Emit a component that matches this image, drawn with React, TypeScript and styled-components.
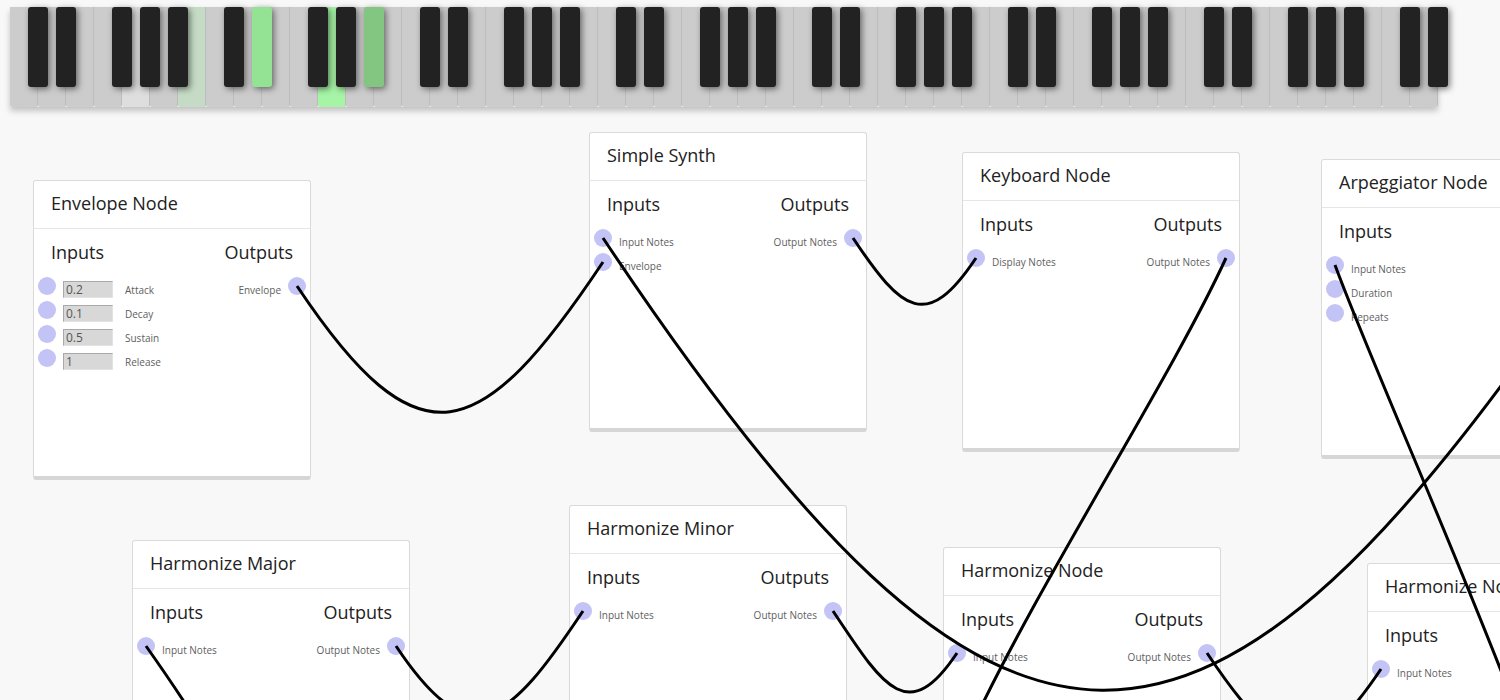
import React from 'react';
import styled, { createGlobalStyle } from 'styled-components';

const GlobalStyle = createGlobalStyle`
  html, body {
    margin: 0;
    padding: 0;
    background: #f8f8f8;
  }
  body {
    font-family: "Open Sans", "Liberation Sans", sans-serif;
    color: #222;
  }
`;

const Canvas = styled.div`
  position: relative;
  width: 1500px;
  height: 700px;
  overflow: hidden;
  background: #f8f8f8;
`;

/* ---------- piano ---------- */

const Piano = styled.div`
  display: flex;
  width: 1428px;
  height: 100px;
  margin: 7px 0 0 10px;
  box-shadow: 0 4px 6px rgba(0, 0, 0, 0.22);
`;

const WhiteKey = styled.div<{ $tone?: string }>`
  position: relative;
  flex: 0 0 28px;
  height: 100px;
  box-sizing: border-box;
  border-right: 1px solid #bcbcbc;
  border-radius: 0 0 2px 2px;
  background: ${(p) => p.$tone ?? '#cccccc'};
`;

const BlackKey = styled.div<{ $tone?: string }>`
  position: absolute;
  top: 0;
  right: -11px;
  width: 20px;
  height: 80px;
  border-radius: 3px;
  background: ${(p) => p.$tone ?? '#222222'};
  box-shadow: 2px 2px 6px rgba(0, 0, 0, 0.5);
  z-index: 1;
`;

const whiteTones: Record<number, string> = {
  4: '#dedede',
  6: '#c5dbc5',
  11: '#a6f4a6',
};
const blackTones: Record<number, string> = {
  8: '#94e294',
  12: '#82c682',
};

const Keyboard = () => (
  <Piano>
    {Array.from({ length: 51 }, (_, i) => {
      const hasBlack = [0, 1, 3, 4, 5].includes(i % 7);
      return (
        <WhiteKey key={i} $tone={whiteTones[i]}>
          {hasBlack && <BlackKey $tone={blackTones[i]} />}
        </WhiteKey>
      );
    })}
  </Piano>
);

/* ---------- nodes ---------- */

const NodeCard = styled.div`
  position: absolute;
  width: 278px;
  height: 300px;
  box-sizing: border-box;
  background: #fff;
  border: 1px solid #dadada;
  border-bottom: 4px solid #d6d6d6;
  border-radius: 3px;
`;

const NodeHeader = styled.div`
  height: 48px;
  box-sizing: border-box;
  padding: 0 17px 3px;
  display: flex;
  align-items: center;
  font-size: 18px;
  white-space: nowrap;
  border-bottom: 1px solid #e6e6e6;
`;

const NodeBody = styled.div`
  display: flex;
  justify-content: space-between;
  padding-top: 11px;
`;

const Column = styled.div<{ $side: 'in' | 'out' }>`
  display: flex;
  flex-direction: column;
  align-items: ${(p) => (p.$side === 'in' ? 'flex-start' : 'flex-end')};
`;

const ColumnTitle = styled.div`
  padding: 0 17px;
  height: 24px;
  line-height: 24px;
  font-size: 18px;
  margin-bottom: 10px;
  white-space: nowrap;
`;

const PortRow = styled.div<{ $side: 'in' | 'out' }>`
  display: flex;
  align-items: flex-start;
  height: 24px;
  flex-direction: ${(p) => (p.$side === 'in' ? 'row' : 'row-reverse')};
  padding: ${(p) => (p.$side === 'in' ? '0 0 0 4px' : '0 4px 0 0')};
`;

const Port = styled.div`
  width: 18px;
  height: 18px;
  margin-top: 3px;
  border-radius: 50%;
  background: #c3c3f6;
  flex: none;
`;

const Field = styled.div`
  width: 50px;
  height: 17px;
  margin: 7px 0 0 7px;
  box-sizing: border-box;
  padding-left: 2px;
  background: #d8d8d8;
  border: 1px solid;
  border-color: #a9a9a9 #e2e2e2 #e2e2e2 #a9a9a9;
  font-size: 12px;
  line-height: 15px;
  color: #555;
`;

const PortLabel = styled.div<{ $gap: number; $side: 'in' | 'out' }>`
  margin-top: 10px;
  ${(p) => (p.$side === 'in' ? `margin-left: ${p.$gap}px;` : `margin-right: ${p.$gap}px;`)}
  font-size: 10px;
  line-height: 12px;
  color: #5e5e5e;
  white-space: nowrap;
`;

type InPort = { label: string; value?: string };
type NodeSpec = {
  id: string;
  title: string;
  x: number;
  y: number;
  inputs: InPort[];
  outputs: string[];
};

const nodes: NodeSpec[] = [
  {
    id: 'env',
    title: 'Envelope Node',
    x: 33,
    y: 180,
    inputs: [
      { label: 'Attack', value: '0.2' },
      { label: 'Decay', value: '0.1' },
      { label: 'Sustain', value: '0.5' },
      { label: 'Release', value: '1' },
    ],
    outputs: ['Envelope'],
  },
  {
    id: 'synth',
    title: 'Simple Synth',
    x: 589,
    y: 132,
    inputs: [{ label: 'Input Notes' }, { label: 'Envelope' }],
    outputs: ['Output Notes'],
  },
  {
    id: 'kbd',
    title: 'Keyboard Node',
    x: 962,
    y: 152,
    inputs: [{ label: 'Display Notes' }],
    outputs: ['Output Notes'],
  },
  {
    id: 'arp',
    title: 'Arpeggiator Node',
    x: 1321,
    y: 159,
    inputs: [{ label: 'Input Notes' }, { label: 'Duration' }, { label: 'Repeats' }],
    outputs: ['Output Notes'],
  },
  {
    id: 'hmaj',
    title: 'Harmonize Major',
    x: 132,
    y: 540,
    inputs: [{ label: 'Input Notes' }],
    outputs: ['Output Notes'],
  },
  {
    id: 'hmin',
    title: 'Harmonize Minor',
    x: 569,
    y: 505,
    inputs: [{ label: 'Input Notes' }],
    outputs: ['Output Notes'],
  },
  {
    id: 'harm',
    title: 'Harmonize Node',
    x: 943,
    y: 547,
    inputs: [{ label: 'Input Notes' }],
    outputs: ['Output Notes'],
  },
  {
    id: 'harm2',
    title: 'Harmonize Node',
    x: 1367,
    y: 563,
    inputs: [{ label: 'Input Notes' }],
    outputs: ['Output Notes'],
  },
];

const GraphNode = ({ node }: { node: NodeSpec }) => (
  <NodeCard style={{ left: node.x, top: node.y }}>
    <NodeHeader>{node.title}</NodeHeader>
    <NodeBody>
      <Column $side="in">
        <ColumnTitle>Inputs</ColumnTitle>
        {node.inputs.map((p) => (
          <PortRow key={p.label} $side="in">
            <Port />
            {p.value !== undefined && <Field>{p.value}</Field>}
            <PortLabel $side="in" $gap={p.value !== undefined ? 12 : 7}>
              {p.label}
            </PortLabel>
          </PortRow>
        ))}
      </Column>
      <Column $side="out">
        <ColumnTitle>Outputs</ColumnTitle>
        {node.outputs.map((label) => (
          <PortRow key={label} $side="out">
            <Port />
            <PortLabel $side="out" $gap={7}>
              {label}
            </PortLabel>
          </PortRow>
        ))}
      </Column>
    </NodeBody>
  </NodeCard>
);

/* ---------- wires ---------- */

type Pt = [number, number];

const byId = (id: string) => nodes.find((n) => n.id === id)!;
const outPort = (id: string, i = 0): Pt => {
  const n = byId(id);
  return [n.x + 278 - 14, n.y + 106 + i * 24];
};
const inPort = (id: string, i = 0): Pt => {
  const n = byId(id);
  return [n.x + 14, n.y + 106 + i * 24];
};

// hanging cable between two ports
const sag = (a: Pt, b: Pt) => {
  const dx = b[0] - a[0];
  const h = 0.4 * dx;
  const k = 0.6 * Math.abs(dx);
  return `M${a[0]},${a[1]} C${a[0] + h},${a[1] + k} ${b[0] - h},${b[1] + k} ${b[0]},${b[1]}`;
};

const wires = [
  sag(outPort('env'), inPort('synth', 1)),
  sag(outPort('synth'), inPort('kbd')),
  sag([1600, 245], inPort('synth', 0)),
  sag(outPort('hmaj'), inPort('hmin')),
  sag(outPort('hmin'), inPort('harm')),
  sag(outPort('harm'), inPort('harm2')),
  // cables whose other end is below the visible area
  'M1226,258 C1170,380 1040,580 970,730',
  'M146,646 C170,680 190,710 205,735',
  'M1335,265 C1370,360 1460,560 1520,720',
];

const WireLayer = styled.svg`
  position: absolute;
  left: 0;
  top: 0;
  pointer-events: none;
  z-index: 5;
`;

export default function App() {
  return (
    <>
      <GlobalStyle />
      <Canvas>
        <Keyboard />
        {nodes.map((n) => (
          <GraphNode key={n.id} node={n} />
        ))}
        <WireLayer width={1500} height={700} viewBox="0 0 1500 700">
          {wires.map((d, i) => (
            <path key={i} d={d} fill="none" stroke="#000" strokeWidth={3} />
          ))}
        </WireLayer>
      </Canvas>
    </>
  );
}
